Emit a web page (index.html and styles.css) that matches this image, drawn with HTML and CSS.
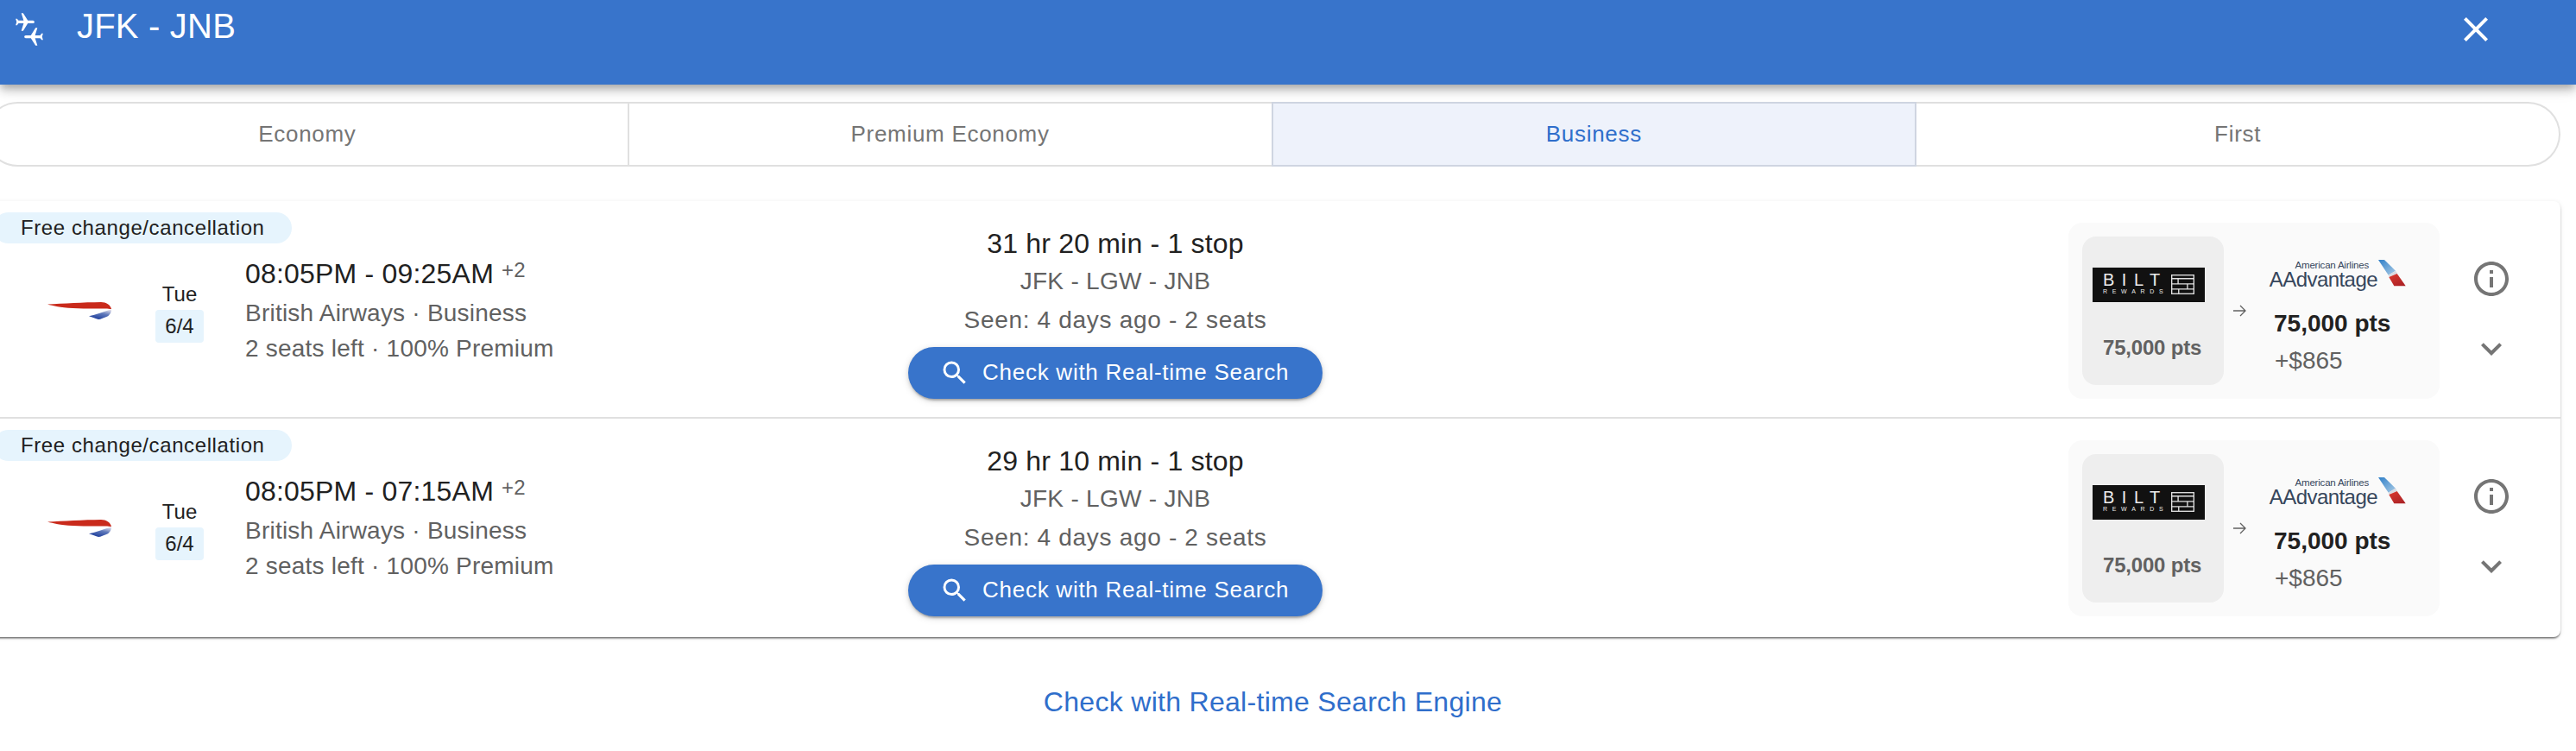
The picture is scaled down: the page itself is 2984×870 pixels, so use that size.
FILE: index.html
```html
<!DOCTYPE html>
<html lang="en">
<head>
<meta charset="utf-8">
<title>JFK - JNB</title>
<link rel="stylesheet" href="styles.css">
</head>
<body>
<svg class="defs" width="0" height="0" aria-hidden="true">
  <defs>
    <linearGradient id="baBlue" x1="0.85" y1="0" x2="0.35" y2="1">
      <stop offset="0" stop-color="#e8e4ee"/>
      <stop offset="0.45" stop-color="#5f79bb"/>
      <stop offset="1" stop-color="#1f3f9c"/>
    </linearGradient>
    <linearGradient id="aaBlue" x1="0" y1="0" x2="1" y2="1">
      <stop offset="0" stop-color="#2f7fc8"/>
      <stop offset="1" stop-color="#a9cbe6"/>
    </linearGradient>
    <linearGradient id="aaRed" x1="0.2" y1="0" x2="0.9" y2="1">
      <stop offset="0" stop-color="#d8392f"/>
      <stop offset="1" stop-color="#a81f24"/>
    </linearGradient>
    <symbol id="ba" viewBox="0 0 74 20">
      <path d="M0 2.6C18 1.6 42 .2 62 0c6 0 11 3 12 8-2 0-4-.6-7-.6-20 .6-46-.4-55-2.2C7 4.4 3 3.4 0 2.6z" fill="#c92a1b"/>
      <path d="M48 16.2c8-1.8 17-5.2 26-8 .4 4-3 8.600-7 9.300-3 .8-5 2.500-8 2.500-3-1-7-2.500-11-3.800z" fill="url(#baBlue)"/>
    </symbol>
    <symbol id="bricks" viewBox="0 0 40 34">
      <g fill="none" stroke="#e0e0e0" stroke-width="2">
        <rect x="1" y="1" width="38" height="32"/>
        <path d="M1 7h38M1 16h38M1 25h38M12 7v9M28 16v9M13 25v8"/>
      </g>
    </symbol>
    <symbol id="fin" viewBox="0 0 36 33">
      <path d="M0 0h7L20 12.700 11.700 17.700z" fill="url(#aaBlue)"/>
      <path d="M11.700 17.700 20 12.700l2 3-9.700 4z" fill="#d8dbe2"/>
      <path d="M12.300 20 21.700 16l10 14.300H18.300z" fill="url(#aaRed)"/>
    </symbol>
    <symbol id="m-search" viewBox="0 0 24 24">
      <path d="M15.500 14h-.79l-.28-.27A6.471 6.471 0 0 0 16 9.500 6.500 6.500 0 1 0 9.500 16c1.610 0 3.090-.59 4.230-1.570l.27.280v.79l5 4.990L20.490 19l-4.990-5zm-6 0C7.010 14 5 11.990 5 9.500S7.010 5 9.500 5 14 7.010 14 9.500 11.990 14 9.500 14z" fill="currentColor"/>
    </symbol>
    <symbol id="m-info" viewBox="0 0 24 24">
      <path d="M11 7h2v2h-2zm0 4h2v6h-2zm1-9C6.480 2 2 6.480 2 12s4.480 10 10 10 10-4.480 10-10S17.520 2 12 2zm0 18c-4.410 0-8-3.590-8-8s3.590-8 8-8 8 3.590 8 8-3.590 8-8 8z" fill="currentColor"/>
    </symbol>
    <symbol id="m-more" viewBox="0 0 24 24">
      <path d="M16.590 8.590 12 13.170 7.410 8.590 6 10l6 6 6-6z" fill="currentColor"/>
    </symbol>
    <symbol id="flight" viewBox="0 0 24 24">
      <path d="M21 16v-2l-8-5V3.500c0-.83-.67-1.500-1.500-1.500S10 2.670 10 3.500V9l-8 5v2l8-2.500V19l-2 1.500V22l3.500-1 3.500 1v-1.500L13 19v-5.500l8 2.500z" fill="currentColor"/>
    </symbol>
  </defs>
</svg>

<header class="topbar">
  <svg class="topbar-plane" viewBox="0 0 32 38" width="32" height="38" aria-hidden="true">
    <use href="#flight" x="-2" y="-2" width="26" height="26" transform="rotate(90 11 11)"/>
    <use href="#flight" x="8" y="14" width="26" height="26" transform="rotate(-90 21 27)"/>
  </svg>
  <h1 class="topbar-title">JFK - JNB</h1>
  <svg class="topbar-close" viewBox="0 0 24 24" width="48" height="48" aria-hidden="true">
    <path d="M19 6.410 17.590 5 12 10.590 6.410 5 5 6.410 10.590 12 5 17.590 6.410 19 12 13.410 17.590 19 19 17.590 13.410 12z" fill="#fff"/>
  </svg>
</header>

<main class="page">
  <nav class="tabs">
    <button class="tab">Economy</button>
    <button class="tab">Premium Economy</button>
    <button class="tab tab-active">Business</button>
    <button class="tab">First</button>
  </nav>

  <section class="card">
    <article class="row">
      <span class="tag">Free change/cancellation</span>
      <svg class="airline" aria-label="British Airways"><use href="#ba"/></svg>
      <div class="date"><span class="date-day">Tue</span><span class="date-chip">6/4</span></div>
      <div class="details">
        <div class="times">08:05PM - 09:25AM <sup class="plus">+2</sup></div>
        <div class="sub">British Airways · Business</div>
        <div class="sub">2 seats left · 100% Premium</div>
      </div>
      <div class="mid">
        <div class="duration">31 hr 20 min - 1 stop</div>
        <div class="route">JFK - LGW - JNB</div>
        <div class="seen">Seen: 4 days ago - 2 seats</div>
        <button class="check"><svg class="check-icon"><use href="#m-search"/></svg>Check with Real-time Search</button>
      </div>
      <div class="points">
        <div class="source">
          <div class="bilt">
            <div class="bilt-words"><span class="bilt-name">BILT</span><span class="bilt-sub">REWARDS</span></div>
            <svg class="bilt-bricks"><use href="#bricks"/></svg>
          </div>
          <div class="source-pts">75,000 pts</div>
        </div>
        <svg class="arrow" viewBox="0 0 15 14" width="15" height="14" aria-hidden="true"><path d="M0 7h14M8 1l6 6-6 6" fill="none" stroke="#616161" stroke-width="1.300"/></svg>
        <div class="target">
          <div class="aa">
            <div class="aa-words"><span class="aa-small">American Airlines</span><span class="aa-big">AAdvantage</span></div>
            <svg class="aa-fin"><use href="#fin"/></svg>
          </div>
          <div class="target-pts">75,000 pts</div>
          <div class="target-fee">+$865</div>
        </div>
      </div>
      <div class="actions">
        <svg class="action-icon action-info"><use href="#m-info"/></svg>
        <svg class="action-icon action-more"><use href="#m-more"/></svg>
      </div>
    </article>

    <article class="row">
      <span class="tag">Free change/cancellation</span>
      <svg class="airline" aria-label="British Airways"><use href="#ba"/></svg>
      <div class="date"><span class="date-day">Tue</span><span class="date-chip">6/4</span></div>
      <div class="details">
        <div class="times">08:05PM - 07:15AM <sup class="plus">+2</sup></div>
        <div class="sub">British Airways · Business</div>
        <div class="sub">2 seats left · 100% Premium</div>
      </div>
      <div class="mid">
        <div class="duration">29 hr 10 min - 1 stop</div>
        <div class="route">JFK - LGW - JNB</div>
        <div class="seen">Seen: 4 days ago - 2 seats</div>
        <button class="check"><svg class="check-icon"><use href="#m-search"/></svg>Check with Real-time Search</button>
      </div>
      <div class="points">
        <div class="source">
          <div class="bilt">
            <div class="bilt-words"><span class="bilt-name">BILT</span><span class="bilt-sub">REWARDS</span></div>
            <svg class="bilt-bricks"><use href="#bricks"/></svg>
          </div>
          <div class="source-pts">75,000 pts</div>
        </div>
        <svg class="arrow" viewBox="0 0 15 14" width="15" height="14" aria-hidden="true"><path d="M0 7h14M8 1l6 6-6 6" fill="none" stroke="#616161" stroke-width="1.300"/></svg>
        <div class="target">
          <div class="aa">
            <div class="aa-words"><span class="aa-small">American Airlines</span><span class="aa-big">AAdvantage</span></div>
            <svg class="aa-fin"><use href="#fin"/></svg>
          </div>
          <div class="target-pts">75,000 pts</div>
          <div class="target-fee">+$865</div>
        </div>
      </div>
      <div class="actions">
        <svg class="action-icon action-info"><use href="#m-info"/></svg>
        <svg class="action-icon action-more"><use href="#m-more"/></svg>
      </div>
    </article>
  </section>

  <a class="engine-link" href="#">Check with Real-time Search Engine</a>
</main>
</body>
</html>
```

FILE: styles.css
```css
* { box-sizing: border-box; }

html, body {
  margin: 0;
  height: 870px;
  overflow: hidden;
  background: #fff;
  font-family: "Liberation Sans", Arial, sans-serif;
  color: #212121;
}

.defs { position: absolute; }

.topbar {
  height: 98px;
  background: #3874cb;
  color: #fff;
  display: flex;
  align-items: flex-start;
  padding: 15px 92px 0 18px;
  box-shadow: 0 4px 8px -2px rgba(0,0,0,.2), 0 8px 10px 0 rgba(0,0,0,.14), 0 2px 20px 0 rgba(0,0,0,.12);
  position: relative;
}
.topbar-plane { flex: none; }
.topbar-title {
  margin: -8px 0 0 39px;
  font-size: 40px;
  line-height: 46px;
  font-weight: 400;
  letter-spacing: .2px;
}
.topbar-close { flex: none; margin: -5px 0 0 auto; }

.page {
  width: 2983px;
  margin-left: -17px;
}

.tabs {
  display: flex;
  height: 75px;
  margin-top: 20px;
}
.tab {
  flex: 0 0 25%;
  border: 2px solid #e0e0e0;
  border-left-width: 0;
  background: #fff;
  color: #757575;
  font: inherit;
  font-size: 26px;
  letter-spacing: .7px;
  padding: 0;
}
.tab:first-child { border-left-width: 2px; border-radius: 38px 0 0 38px; }
.tab:last-child { border-radius: 0 38px 38px 0; }
.tab-active {
  flex-basis: calc(25% + 2px);
  margin-left: -2px;
  background: #eef2fb;
  color: #2f6ecb;
  border-color: #cfd5e1;
  border-left-width: 2px;
}

.card {
  margin-top: 40px;
  width: 2983px;
  background: #fff;
  border-radius: 8px;
  box-shadow: 0 2px 2px -1px rgba(0,0,0,.4), 0 2px 2px 0 rgba(0,0,0,.25), 0 1px 6px 0 rgba(0,0,0,.08);
}

.row {
  position: relative;
  height: 252px;
  display: flex;
  align-items: center;
  padding: 3px 56px 0 72px;
  border-bottom: 2px solid #e0e0e0;
}
.row:last-child { height: 253px; padding-bottom: 3px; border-bottom: 0; }

.tag {
  position: absolute;
  left: 9px;
  top: 13px;
  height: 36px;
  padding: 0 31px 0 32px;
  border-radius: 18px;
  background: #e6f4fd;
  font-size: 24px;
  line-height: 36px;
  letter-spacing: .6px;
  white-space: nowrap;
}

.airline { flex: none; width: 74px; height: 20px; }

.date {
  flex: none;
  width: 56px;
  margin-left: 51px;
  display: flex;
  flex-direction: column;
  align-items: center;
  font-size: 24px;
}
.date-day { line-height: 36px; }
.date-chip {
  width: 56px;
  height: 38px;
  line-height: 38px;
  text-align: center;
  background: #e6f4fd;
  border-radius: 4px;
}

.details { flex: none; width: 768px; margin-left: 48px; }
.times { font-size: 32px; line-height: 44px; margin-bottom: 3px; letter-spacing: .2px; white-space: nowrap; }
.plus { font-size: 24px; line-height: 0; color: #616161; vertical-align: 7px; }
.sub { font-size: 28px; line-height: 41px; letter-spacing: .22px; color: #616161; }

.mid {
  flex: none;
  width: 480px;
  padding-top: 2px;
  text-align: center;
  display: flex;
  flex-direction: column;
  align-items: center;
}
.duration { font-size: 32px; line-height: 44px; letter-spacing: .2px; white-space: nowrap; }
.route { font-size: 28px; line-height: 44px; letter-spacing: .3px; color: #616161; }
.seen { font-size: 28px; line-height: 45px; letter-spacing: .68px; color: #616161; white-space: nowrap; }
.check {
  margin-top: 9px;
  width: 480px;
  height: 60px;
  border: 0;
  border-radius: 30px;
  background: #3874cb;
  color: #fff;
  font: inherit;
  font-size: 26px;
  letter-spacing: .74px;
  display: flex;
  align-items: center;
  padding: 0 0 0 36px;
  white-space: nowrap;
  box-shadow: 0 4px 2px -2px rgba(0,0,0,.2), 0 2px 4px 0 rgba(0,0,0,.14), 0 2px 10px 0 rgba(0,0,0,.12);
}
.check-icon { flex: none; width: 36px; height: 36px; margin-right: 14px; }

.points {
  flex: none;
  width: 430px;
  height: 204px;
  margin-left: auto;
  padding: 16px;
  display: flex;
  align-items: center;
  background: #fafafa;
  border-radius: 16px;
}
.source {
  flex: none;
  width: 164px;
  height: 172px;
  border-radius: 16px;
  background: #eeeeee;
  display: flex;
  flex-direction: column;
  align-items: flex-start;
  padding: 36px 0 0 12px;
}
.bilt {
  width: 130px;
  height: 40px;
  background: #111;
  display: flex;
  align-items: center;
  padding: 0 0 0 12px;
  color: #ececec;
  overflow: hidden;
}
.bilt-words { display: flex; flex-direction: column; flex: none; width: 79px; }
.bilt-name { font-size: 20px; line-height: 17px; letter-spacing: 8.500px; font-weight: 400; white-space: nowrap; }
.bilt-sub { font-size: 7px; line-height: 10px; letter-spacing: 5.700px; font-weight: 400; white-space: nowrap; }
.bilt-bricks { flex: none; width: 27px; height: 23px; }
.source-pts { margin: 38px 0 0 12px; font-size: 24px; line-height: 30px; font-weight: 700; letter-spacing: -.2px; color: #616161; white-space: nowrap; }

.arrow { flex: none; margin-left: 11px; }

.target { flex: none; margin: 20px 0 0 28px; width: 170px; }
.aa { display: flex; align-items: flex-start; height: 32px; }
.aa-words { display: flex; flex-direction: column; align-items: flex-end; flex: none; width: 124px; color: #36465c; }
.aa-small { font-size: 11.500px; line-height: 11px; letter-spacing: -.2px; margin-right: 10px; }
.aa-big { font-size: 24px; line-height: 21px; letter-spacing: -.55px; white-space: nowrap; }
.aa-fin { flex: none; width: 36px; height: 33px; margin-left: 1px; margin-top: -1px; }
.target-pts { margin: 23px 0 0 4px; font-size: 28px; line-height: 36px; font-weight: 700; white-space: nowrap; }
.target-fee { margin: 5px 0 0 5px; font-size: 28px; line-height: 40px; color: #616161; }

.actions {
  flex: none;
  width: 48px;
  margin-left: 36px;
  display: flex;
  flex-direction: column;
  color: #757575;
}
.action-icon { width: 48px; height: 48px; display: block; }
.action-info { margin-top: 8px; }
.action-more { margin-top: 33px; }

.engine-link {
  display: block;
  margin-top: 52px;
  text-align: center;
  font-size: 32px;
  line-height: 46px;
  letter-spacing: .3px;
  color: #2f6ecb;
  text-decoration: none;
}
```
